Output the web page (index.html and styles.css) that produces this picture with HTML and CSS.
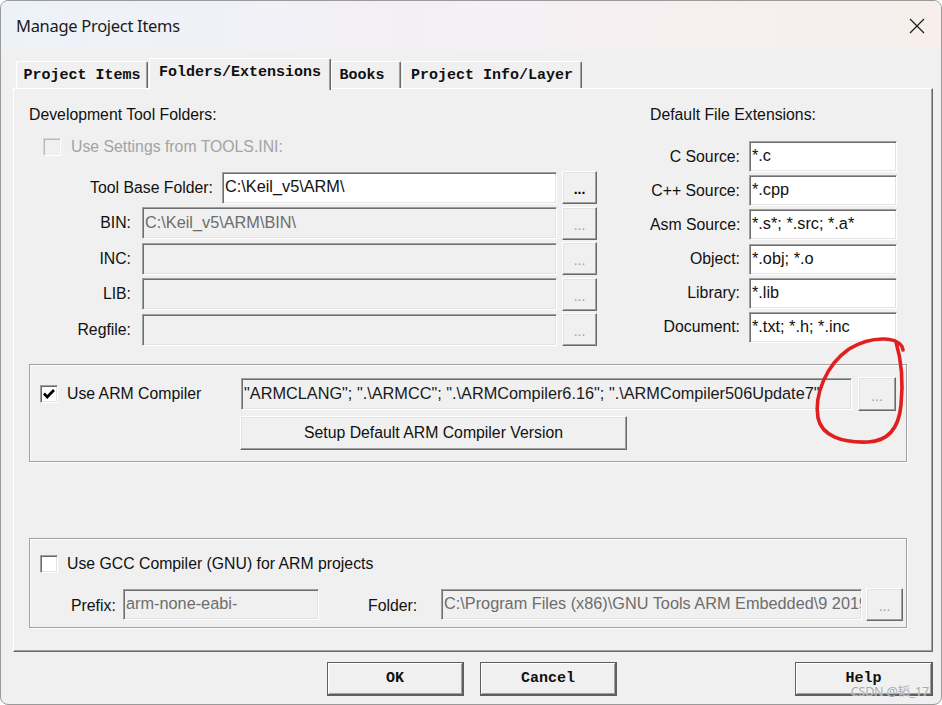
FILE: index.html
```html
<!DOCTYPE html>
<html>
<head>
<meta charset="utf-8">
<link rel="stylesheet" href="styles.css">
</head>
<body>
<div class="window">
  <div class="titlebar">
    <span class="title">Manage Project Items</span>
    <svg class="close" width="16" height="16" viewBox="0 0 16 16"><path d="M1 1 L15 15 M15 1 L1 15" stroke="#1a1a1a" stroke-width="1.2" fill="none"/></svg>
  </div>
  <div class="client">
    <div class="tabs">
      <div class="tab t1">Project Items</div>
      <div class="tab sel t2">Folders/Extensions</div>
      <div class="tab t3">Books</div>
      <div class="tab t4">Project Info/Layer</div>
    </div>
    <div class="panel">
      <div class="top">
        <div class="folders">
          <div class="heading">Development Tool Folders:</div>
          <div class="chkrow disabled">
            <span class="chk dis"></span>
            <span class="gray">Use Settings from TOOLS.INI:</span>
          </div>
          <div class="rows">
            <div class="frow">
              <span class="flabel wide">Tool Base Folder:</span>
              <div class="edit">C:\Keil_v5\ARM\</div>
              <div class="dots">...</div>
            </div>
            <div class="frow">
              <span class="flabel">BIN:</span>
              <div class="edit off">C:\Keil_v5\ARM\BIN\</div>
              <div class="dots off">...</div>
            </div>
            <div class="frow">
              <span class="flabel">INC:</span>
              <div class="edit off"></div>
              <div class="dots off">...</div>
            </div>
            <div class="frow">
              <span class="flabel">LIB:</span>
              <div class="edit off"></div>
              <div class="dots off">...</div>
            </div>
            <div class="frow">
              <span class="flabel">Regfile:</span>
              <div class="edit off"></div>
              <div class="dots off">...</div>
            </div>
          </div>
        </div>
        <div class="exts">
          <div class="heading">Default File Extensions:</div>
          <div class="erows">
            <div class="erow"><span class="elabel">C Source:</span><div class="edit">*.c</div></div>
            <div class="erow"><span class="elabel">C++ Source:</span><div class="edit">*.cpp</div></div>
            <div class="erow"><span class="elabel">Asm Source:</span><div class="edit">*.s*; *.src; *.a*</div></div>
            <div class="erow"><span class="elabel">Object:</span><div class="edit">*.obj; *.o</div></div>
            <div class="erow"><span class="elabel">Library:</span><div class="edit">*.lib</div></div>
            <div class="erow"><span class="elabel">Document:</span><div class="edit">*.txt; *.h; *.inc</div></div>
          </div>
        </div>
      </div>

      <div class="group g1">
        <div class="g1row">
          <div class="lead">
            <span class="chk"><svg width="16" height="16" viewBox="0 0 16 16"><path d="M3 7.5 L6.2 11 L13 4" stroke="#000" stroke-width="2.6" fill="none"/></svg></span>
            <span>Use ARM Compiler</span>
          </div>
          <div class="edit ro armedit">"ARMCLANG"; ".\ARMCC"; ".\ARMCompiler6.16"; ".\ARMCompiler506Update7"</div>
          <div class="dots off armdots">...</div>
        </div>
        <div class="setup">Setup Default ARM Compiler Version</div>
      </div>

      <div class="group g2">
        <div class="g2row1">
          <span class="chk"></span>
          <span>Use GCC Compiler (GNU) for ARM projects</span>
        </div>
        <div class="g2row2">
          <span class="plabel">Prefix:</span>
          <div class="edit off prefix">arm-none-eabi-</div>
          <span class="folabel">Folder:</span>
          <div class="edit off gfolder">C:\Program Files (x86)\GNU Tools ARM Embedded\9 2019</div>
          <div class="dots off gdots">...</div>
        </div>
      </div>
    </div>
    <div class="buttons">
      <div class="btn ok">OK</div>
      <div class="btn cancel">Cancel</div>
      <div class="btn help">Help</div>
    </div>
  </div>
  <svg class="annot" width="942" height="705" viewBox="0 0 942 705">
    <path d="M903 350 C901 336 872 335 849 349 C826 365 814 395 818 418 C822 436 842 443 868 442 C890 441 899 426 901 405 C903 385 902 362 896 342" stroke="#e11f1f" stroke-width="3.6" fill="none" stroke-linecap="round"/>
  </svg>
  <span class="watermark">CSDN @韬_17</span>
</div>
</body>
</html>
```
FILE: styles.css
```css
* { box-sizing: border-box; }
html, body { margin: 0; padding: 0; background: #ffffff; }
body { font-family: "Liberation Sans", Arial, sans-serif; font-size: 15.8px; color: #111; }

.window {
  position: relative;
  width: 942px;
  height: 705px;
  border: 1px solid #9a9a9a;
  border-radius: 8px;
  overflow: hidden;
  background: #f0f0f0;
}

.titlebar {
  height: 49px;
  display: flex;
  align-items: center;
  justify-content: space-between;
  padding: 0 16px 0 15px;
  background: linear-gradient(90deg, #edf2f9 0%, #f4f0f4 50%, #f8efec 100%);
}
.title {
  font-family: "Noto Sans", "Open Sans", sans-serif;
  font-size: 16.5px;
  letter-spacing: -0.3px;
  color: #1b1b1b;
}
.close { display: block; }

.client { padding: 8px 0 0 12px; }

.tabs {
  display: flex;
  align-items: flex-end;
  height: 30px;
  padding-left: 3px;
}
.tab {
  font-family: "Liberation Mono", "DejaVu Sans Mono", monospace;
  font-weight: bold;
  font-size: 15px;
  color: #101010;
  height: 27px;
  display: flex;
  align-items: center;
  justify-content: center;
  border-top: 1px solid #ffffff;
  border-left: 1px solid #ffffff;
  border-right: 1px solid #696969;
  border-radius: 2px 2px 0 0;
  box-shadow: inset -1px 0 0 #a0a0a0;
  background: #f0f0f0;
}
.t1 { width: 132px; }
.t2 { width: 182px; margin-left: 1px; }
.t3 { width: 70px; padding-right: 8px; }
.t4 { width: 180px; margin-left: 1px; }
.tab.sel {
  height: 32px;
  margin-bottom: -2px;
  padding-bottom: 4px;
  position: relative;
  z-index: 2;
}

.panel {
  width: 920px;
  height: 564px;
  border-top: 1px solid #ffffff;
  border-left: 1px solid #ffffff;
  border-right: 1px solid #696969;
  border-bottom: 1px solid #696969;
  box-shadow: inset -1px -1px 0 #a0a0a0;
  background: #f0f0f0;
  position: relative;
  z-index: 1;
}

.top { display: flex; padding: 17px 0 0 15px; }
.folders { width: 568px; }
.heading { height: 18px; line-height: 18px; white-space: nowrap; }

.chkrow {
  margin-top: 13px;
  margin-left: 14px;
  height: 19px;
  display: flex;
  align-items: center;
  gap: 10px;
}
.gray { color: #a3a3a3; }

.chk {
  width: 18px;
  height: 18px;
  flex: none;
  background: #ffffff;
  border-style: solid;
  border-width: 1px;
  border-color: #a0a0a0 #ffffff #ffffff #a0a0a0;
  box-shadow: inset 1px 1px 0 #696969, inset -1px -1px 0 #e3e3e3;
  display: flex;
  align-items: center;
  justify-content: center;
}
.chk svg { display: block; }
.chk.dis {
  background: #f0f0f0;
  border-color: #d8d8d8 #ffffff #ffffff #d8d8d8;
  box-shadow: inset 1px 1px 0 #b8b8b8, inset -1px -1px 0 #ececec;
}

.rows { margin-top: 15px; display: flex; flex-direction: column; gap: 2.5px; }
.frow { height: 33px; display: flex; align-items: center; }
.flabel { width: 102px; text-align: right; margin-right: 11px; flex: none; white-space: nowrap; }
.flabel.wide { width: 184px; margin-right: 9px; }
.frow .edit { flex: 1; height: 32px; margin-right: 5px; }
.frow .dots { width: 35px; height: 33px; }

.edit {
  background: #ffffff;
  border-style: solid;
  border-width: 1px;
  border-color: #a0a0a0 #ffffff #ffffff #a0a0a0;
  box-shadow: inset 1px 1px 0 #6f6f6f, inset -1px -1px 0 #e3e3e3;
  padding: 0 0 2px 2px;
  display: flex;
  align-items: center;
  white-space: nowrap;
  overflow: hidden;
  font-size: 16.3px;
  color: #111;
}
.edit.off { background: #f0f0f0; color: #6d6d6d; }
.edit.ro { background: #f0f0f0; color: #1a1a1a; }

.dots {
  background: #f0f0f0;
  border-style: solid;
  border-width: 1px;
  border-color: #ffffff #696969 #696969 #ffffff;
  box-shadow: inset -1px -1px 0 #a0a0a0, inset 1px 1px 0 #e3e3e3;
  display: flex;
  align-items: flex-end;
  justify-content: center;
  padding-bottom: 7px;
  font-weight: bold;
  font-size: 14px;
  line-height: 14px;
  color: #000;
  flex: none;
}
.dots.off { color: #a0a0a0; font-weight: normal; }

.exts { margin-left: 53px; width: 247px; }
.erows { margin-top: 17px; display: flex; flex-direction: column; gap: 3.2px; }
.erow { height: 31px; display: flex; align-items: center; }
.elabel { width: 90px; text-align: right; margin-right: 9px; flex: none; white-space: nowrap; }
.erow .edit { width: 148px; height: 31px; }

.group {
  margin-left: 15px;
  width: 878px;
  border: 1px solid #a0a0a0;
  box-shadow: inset 1px 1px 0 #ffffff, 1px 1px 0 #ffffff;
}
.g1 { margin-top: 18px; height: 98px; padding: 12px 0 0 10px; }
.g1row { height: 34px; display: flex; align-items: center; }
.lead { width: 201px; flex: none; display: flex; align-items: center; gap: 9px; }
.armedit { width: 611px; height: 32px; flex: none; }
.armdots { width: 38px; height: 34px; margin-left: 6px; }
.setup {
  margin-top: 5px;
  margin-left: 200px;
  width: 387px;
  height: 34px;
  background: #f0f0f0;
  border-style: solid;
  border-width: 1px;
  border-color: #ffffff #696969 #696969 #ffffff;
  box-shadow: inset -1px -1px 0 #a0a0a0, inset 1px 1px 0 #e3e3e3;
  display: flex;
  align-items: center;
  justify-content: center;
  padding-bottom: 1px;
}

.g2 { margin-top: 76px; height: 90px; padding: 16px 0 0 10px; }
.g2row1 { height: 18px; display: flex; align-items: center; gap: 9px; }
.g2row2 { margin-top: 15px; height: 33px; display: flex; align-items: center; }
.plabel { margin-left: 31px; width: 52px; flex: none; padding-top: 2px; }
.prefix { width: 196px; height: 31px; flex: none; }
.folabel { margin-left: 49px; width: 73px; flex: none; padding-top: 2px; }
.gfolder { width: 421px; height: 31px; flex: none; }
.gdots { width: 37px; height: 33px; margin-left: 4px; }

.buttons {
  margin-top: 10px;
  width: 920px;
  height: 34px;
  display: flex;
  padding-left: 314px;
}
.btn {
  height: 34px;
  background: #f0f0f0;
  border: 1px solid #5f5f5f;
  border-right-width: 2px;
  border-bottom-width: 2px;
  box-shadow: inset 1px 1px 0 #ffffff, inset -1px -1px 0 #a0a0a0;
  display: flex;
  align-items: center;
  justify-content: center;
  font-family: "Liberation Mono", "DejaVu Sans Mono", monospace;
  font-weight: bold;
  font-size: 15px;
  color: #101010;
}
.ok { width: 137px; }
.cancel { width: 137px; margin-left: 16px; }
.help { width: 138px; margin-left: auto; }

.annot { position: absolute; left: -1px; top: -1px; pointer-events: none; z-index: 5; }

.watermark {
  position: absolute;
  right: 12px;
  bottom: 4px;
  z-index: 6;
  font-family: "Noto Sans", "Noto Sans CJK SC", sans-serif;
  font-size: 12.5px;
  color: #a9a9a9;
  text-shadow: 0 0 1px #ffffff;
  letter-spacing: -0.2px;
}
```
